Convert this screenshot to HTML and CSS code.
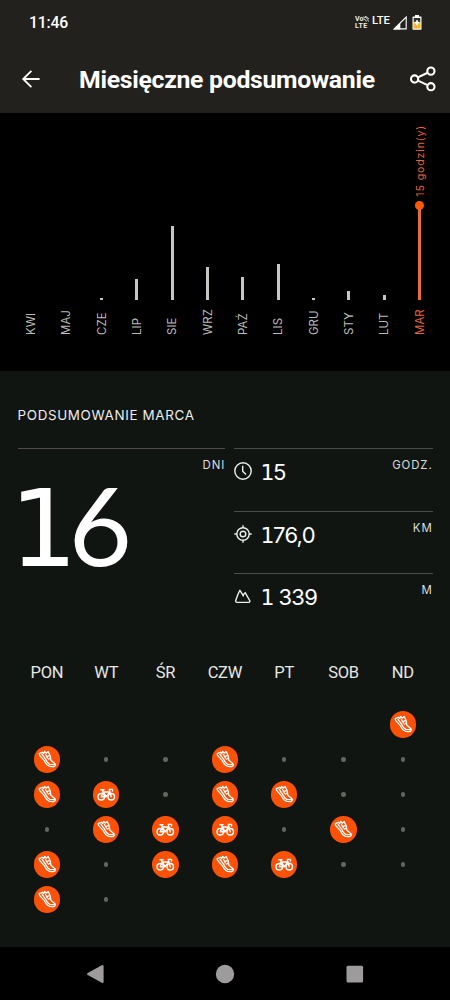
FILE: index.html
```html
<!DOCTYPE html>
<html lang="pl">
<head>
<meta charset="utf-8">
<title>Miesięczne podsumowanie</title>
<link rel="stylesheet" href="styles.css">
</head>
<body>
<svg class="defs" aria-hidden="true">
  <symbol id="shoe" viewBox="0 0 27 27">
    <g fill="none" stroke="#fff" stroke-width="1.35" stroke-linejoin="round" stroke-linecap="round">
      <path d="M5.3 7.8L8.6 6.4L9.9 7.6L10.8 5.5L12.7 7.1L14.4 5.6L16.4 9.6L17.2 14.6L21.4 18.2Q22.4 20.6 19.8 21Q16.4 21.4 13.8 19.6Q11.8 18 10.3 14.6L5.7 9.6Z"/>
      <path d="M8.2 8.6L11.8 13.4Q13.6 17.6 16 18.7L21 19"/>
      <path d="M11.6 8.4L13.6 12.2M13.6 10.5L15.6 9.8M14.6 13.3L16.6 12.4"/>
    </g>
  </symbol>
  <symbol id="bike" viewBox="0 0 27 27">
    <g fill="none" stroke="#fff" stroke-width="1.45" stroke-linejoin="round" stroke-linecap="round">
      <circle cx="8.4" cy="16" r="3.3"/><circle cx="18.6" cy="16" r="3.3"/>
      <path d="M8.4 16L10.4 11.2L13.4 16H8.4M13.4 16L17.2 11.2H10.4L9.7 9.2M8 9H11.2M18.6 16L16.6 8.5H19.3Q20.4 9 19.8 10.2"/>
    </g>
  </symbol>
</svg>
<main class="phone">
  <header class="top">
    <div class="status">
      <span class="time">11:46</span>
      <div class="indicators">
        <span class="volte"><span class="volte-row">Vo<svg width="6" height="6" viewBox="0 0 6 6" fill="none" stroke="#eee" stroke-width=".9"><path d="M.3 1Q4.6 1 5.4 5.6M.3 3Q2.8 3 3.4 5.6M2 .4Q4.6 .8 5.8 3"/></svg></span><span class="volte-sub">LTE</span></span>
        <span class="lte">LTE</span>
        <svg class="signal" width="14" height="14" viewBox="0 0 14 14"><path d="M1.2 12.9L13.2 1V12.9Z" fill="none" stroke="#fff" stroke-width="1.1"/><path d="M.5 13.4L7.3 6.5V13.4Z" fill="#fff"/></svg>
        <svg class="battery" width="10" height="15" viewBox="0 0 10 15"><path d="M3 0H7V1.5H9Q9.5 1.5 9.5 2V14Q9.5 14.7 8.8 14.7H1.2Q.5 14.7 .5 14V2Q.5 1.5 1 1.5H3Z" fill="#fff"/><path d="M1.7 3H8.3V7H1.7Z" fill="#33322b"/><path d="M1.4 7H8.6V13.6H1.4Z" fill="#f4b52b"/><path d="M5 5.2V10.2M2.6 7.7H7.4" stroke="#fff" stroke-width="1.8"/></svg>
      </div>
    </div>
    <div class="titlebar">
      <svg class="back" width="20" height="20" viewBox="0 0 20 20" fill="none" stroke="#fff" stroke-width="1.8"><path d="M18.6 10H2.3M10.4 1.8L2.2 10L10.4 18.2"/></svg>
      <h1>Miesięczne podsumowanie</h1>
      <svg class="share" width="28" height="28" viewBox="0 0 28 28" fill="none" stroke="#fff" stroke-width="2.1"><circle cx="5.6" cy="14" r="3.6"/><circle cx="21.9" cy="6.1" r="3.6"/><circle cx="21.9" cy="21.7" r="3.6"/><path d="M8.9 12.4L18.6 7.7M8.9 15.6L18.6 20.1"/></svg>
    </div>
  </header>

  <section class="chart">
    <div class="month"><div class="plot"></div><span class="label">KWI</span></div>
    <div class="month"><div class="plot"></div><span class="label">MAJ</span></div>
    <div class="month"><div class="plot"><i class="bar" style="height:2px"></i></div><span class="label">CZE</span></div>
    <div class="month"><div class="plot"><i class="bar" style="height:21px"></i></div><span class="label">LIP</span></div>
    <div class="month"><div class="plot"><i class="bar" style="height:74px"></i></div><span class="label">SIE</span></div>
    <div class="month"><div class="plot"><i class="bar" style="height:33px"></i></div><span class="label">WRZ</span></div>
    <div class="month"><div class="plot"><i class="bar" style="height:23px"></i></div><span class="label">PAŹ</span></div>
    <div class="month"><div class="plot"><i class="bar" style="height:36px"></i></div><span class="label">LIS</span></div>
    <div class="month"><div class="plot"><i class="bar" style="height:2px"></i></div><span class="label">GRU</span></div>
    <div class="month"><div class="plot"><i class="bar" style="height:9.5px"></i></div><span class="label">STY</span></div>
    <div class="month"><div class="plot"><i class="bar" style="height:5px"></i></div><span class="label">LUT</span></div>
    <div class="month active"><div class="plot"><span class="value">15 godzin(y)</span><i class="knob"></i><i class="bar" style="height:91px"></i></div><span class="label">MAR</span></div>
  </section>

  <section class="summary">
    <h2>PODSUMOWANIE MARCA</h2>
    <div class="stats">
      <div class="days"><span class="unit">DNI</span><span class="big"><span class="one">1</span>6</span></div>
      <div class="list">
        <div class="stat">
          <svg width="18" height="18" viewBox="0 0 18 18" fill="none" stroke="#eee" stroke-width="1.4"><circle cx="9" cy="9" r="8.2"/><path d="M8.7 3.8V9.2L12 12.5"/></svg>
          <span class="num"><span class="one">1</span>5</span><span class="unit">GODZ.</span>
        </div>
        <div class="stat">
          <svg width="18" height="18" viewBox="0 0 18 18" fill="none" stroke="#eee" stroke-width="1.4"><circle cx="9" cy="9" r="6.2"/><circle cx="9" cy="9" r="2.8"/><path d="M9 .3V3M9 15V17.7M.3 9H3M15 9H17.7"/></svg>
          <span class="num"><span class="one">1</span>76,0</span><span class="unit">KM</span>
        </div>
        <div class="stat">
          <svg width="18" height="18" viewBox="0 0 18 18" fill="none" stroke="#eee" stroke-width="1.4" stroke-linejoin="round"><path d="M5.9 3.3L8.9 8.2L11.2 5.6L13 8.8L15.7 13.5Q16.3 15.2 14.8 15.4H3Q1.5 15.4 1.7 13.6L4 7.2Z"/><path d="M8.9 8.2L9.6 9.5"/></svg>
          <span class="num"><span class="one">1</span> 339</span><span class="unit">M</span>
        </div>
      </div>
    </div>

    <div class="weekdays"><span>PON</span><span>WT</span><span>ŚR</span><span>CZW</span><span>PT</span><span>SOB</span><span>ND</span></div>
    <div class="calendar">
      <b></b><b></b><b></b><b></b><b></b><b></b><b class="act"><svg><use href="#shoe"/></svg></b>
      <b class="act"><svg><use href="#shoe"/></svg></b><b class="rest"></b><b class="rest"></b><b class="act"><svg><use href="#shoe"/></svg></b><b class="rest"></b><b class="rest"></b><b class="rest"></b>
      <b class="act"><svg><use href="#shoe"/></svg></b><b class="act"><svg><use href="#bike"/></svg></b><b class="rest"></b><b class="act"><svg><use href="#shoe"/></svg></b><b class="act"><svg><use href="#shoe"/></svg></b><b class="rest"></b><b class="rest"></b>
      <b class="rest"></b><b class="act"><svg><use href="#shoe"/></svg></b><b class="act"><svg><use href="#bike"/></svg></b><b class="act"><svg><use href="#bike"/></svg></b><b class="rest"></b><b class="act"><svg><use href="#shoe"/></svg></b><b class="rest"></b>
      <b class="act"><svg><use href="#shoe"/></svg></b><b class="rest"></b><b class="act"><svg><use href="#bike"/></svg></b><b class="act"><svg><use href="#shoe"/></svg></b><b class="act"><svg><use href="#bike"/></svg></b><b class="rest"></b><b class="rest"></b>
      <b class="act"><svg><use href="#shoe"/></svg></b><b class="rest"></b>
    </div>
  </section>

  <nav class="sysnav">
    <svg width="20" height="20" viewBox="0 0 20 20"><path d="M3.3 10L17.4 2.2V17.8Z" fill="#9d9b9c" stroke="#9d9b9c" stroke-width="2.4" stroke-linejoin="round"/></svg>
    <svg width="20" height="20" viewBox="0 0 20 20"><circle cx="10" cy="10" r="9.2" fill="#9d9b9c"/></svg>
    <svg width="20" height="20" viewBox="0 0 20 20"><rect x="1.5" y="1.8" width="16.6" height="16.6" rx="1.5" fill="#9d9b9c"/></svg>
  </nav>
</main>
</body>
</html>
```

FILE: styles.css
```css
* { box-sizing: border-box; }
body { margin: 0; background: #000; color: #fff; font-family: Roboto, "Liberation Sans", sans-serif; }
.defs { display: none; }
svg { display: block; flex: none; }
.phone { width: 450px; height: 1000px; display: flex; flex-direction: column; overflow: hidden; }

.top { height: 113px; background: #22211d; }
.status { height: 45px; padding: 0 28px 0 29px; display: flex; justify-content: space-between; align-items: center; }
.time { font-size: 15.8px; font-weight: 500; line-height: 45px; letter-spacing: -.2px; }
.indicators { display: flex; align-items: center; padding-top: 0; }
.volte { display: flex; flex-direction: column; font-size: 7px; line-height: 8px; font-weight: 700; color: #eee; width: 14px; margin-right: 3px; }
.volte-row { display: flex; height: 7px; line-height: 7px; }
.volte-sub { height: 7px; line-height: 7px; letter-spacing: .4px; }
.lte { font-size: 11.3px; font-weight: 500; line-height: 14px; padding-bottom: 3px; margin-right: 3px; }
.signal { margin-right: 5px; }
.titlebar { height: 68px; padding: 0 13px 0 21px; display: flex; align-items: center; }
.titlebar h1 { margin: 2px 0 0 38px; width: 330px; font-size: 24.8px; line-height: 36px; font-weight: 700; letter-spacing: -.3px; white-space: nowrap; }

.chart { height: 258px; padding: 0 13.3px; display: grid; grid-template-columns: repeat(12, 35.33px); background: #000; color: #bdbcb9; }
.month { display: flex; flex-direction: column; align-items: center; }
.plot { height: 187px; display: flex; flex-direction: column; align-items: center; justify-content: flex-end; }
.bar { width: 3px; background: #c9c6c2; }
.label { height: 35px; font-family: Inter, sans-serif; font-size: 11.4px; line-height: 14px; letter-spacing: .1px; writing-mode: vertical-rl; transform: rotate(180deg); white-space: nowrap; }
.active { color: #e4653c; }
.active .bar { background: #e96c3a; }
.knob { width: 9px; height: 9px; border-radius: 50%; background: #ff5a0a; margin-bottom: -1px; flex: none; }
.value { font-family: Inter, sans-serif; font-size: 10.6px; line-height: 14px; letter-spacing: .85px; writing-mode: vertical-rl; transform: rotate(180deg); white-space: nowrap; margin-bottom: 4px; margin-left: 3px; }

.summary { height: 576px; padding: 34px 17.6px 0; background: #101512; }
.summary h2 { margin: 0; font-family: Inter, sans-serif; font-size: 13.4px; line-height: 20px; font-weight: 400; letter-spacing: .65px; color: #eee; }
.stats { margin-top: 23px; display: grid; grid-template-columns: 207.5px 199px; gap: 8.5px; height: 188px; }
.days { border-top: 1px solid #504c47; display: flex; flex-direction: column; }
.unit { font-family: Inter, sans-serif; font-size: 11.4px; line-height: 14px; letter-spacing: .9px; color: #ddd; margin-left: auto; padding-top: 9px; }
.big { font-family: Lato, sans-serif; font-size: 109px; line-height: 112px; letter-spacing: -8px; margin: -4px 0 0 -8px; }
.one { font-family: "DejaVu Sans", sans-serif; }
.big .one { font-size: 107px; letter-spacing: -9px; }
.stat { height: 62.5px; border-top: 1px solid #4a4d49; display: flex; align-items: flex-start; }
.stat svg { margin-top: 13px; }
.num { font-family: Inter, sans-serif; font-size: 22px; line-height: 28px; letter-spacing: -.75px; margin: 9px 0 0 9px; }
.num .one { letter-spacing: -1.5px; }

.weekdays { margin-top: 26px; height: 22px; display: grid; grid-template-columns: repeat(7, 59.33px); text-align: center; font-size: 16.5px; line-height: 22px; letter-spacing: -.3px; color: #e7e7e3; }
.weekdays, .calendar { margin-left: -.4px; }
.calendar { margin-top: 23px; display: grid; grid-template-columns: repeat(7, 59.33px); grid-auto-rows: 35px; place-items: center; }
.act { width: 26.5px; height: 26.5px; border-radius: 50%; background: #fc5208; }
.act svg { width: 26.5px; height: 26.5px; }
.rest { width: 4.5px; height: 4.5px; border-radius: 50%; background: #62665f; }

.sysnav { height: 53px; padding: 0 85px; display: flex; justify-content: space-between; align-items: center; background: #000; }
```
